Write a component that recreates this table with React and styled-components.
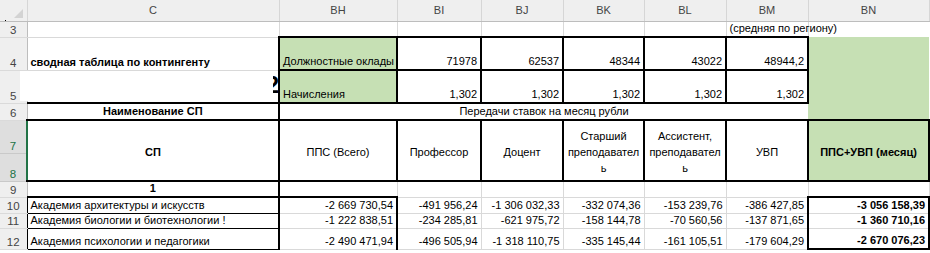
import React from 'react';
import styled, { createGlobalStyle } from 'styled-components';

const Global = createGlobalStyle`
  html, body { margin: 0; padding: 0; background: #fff; }
  body { font-family: "Liberation Sans", Arial, sans-serif; font-size: 11px; color: #000; }
`;

const GREEN = '#c6e0b4';
const GRID = '#d9d9d9';

const bd = (v) => {
  switch (v) {
    case 'K': return '2px solid #000';
    case 'k': return '1px solid #000';
    case 'n': return 'none';
    case 'h': return 'hidden';
    default: return `1px solid ${GRID}`;
  }
};

const Sheet = styled.div`
  position: relative;
  width: 930px;
  height: 253px;
  overflow: hidden;
  background: #fff;
`;

const Table = styled.table`
  border-collapse: collapse;
  table-layout: fixed;
  width: 929px;
`;

const Row = styled.tr`
  height: ${(p) => p.$h}px;
`;

const ColHead = styled.th`
  background: #efefef;
  color: #444;
  font-weight: 400;
  font-size: 11px;
  text-align: center;
  vertical-align: middle;
  padding: 0;
  border-right: 1px solid #d6d6d6;
  border-bottom: 1px solid #bdbdbd;
  border-top: none;
`;

const Corner = styled.th`
  background: #efefef;
  border-right: 1px solid #d6d6d6;
  border-bottom: 1px solid #bdbdbd;
  padding: 0;
  position: relative;
`;

const Tri = styled.span`
  position: absolute;
  right: 4px;
  bottom: 3px;
  width: 0;
  height: 0;
  border-left: 9px solid transparent;
  border-bottom: 9px solid #d3d3d3;
`;

const RowHead = styled.th`
  background: ${(p) => (p.$sel ? '#dedede' : '#efefef')};
  color: ${(p) => (p.$sel ? '#217346' : '#444')};
  font-weight: 400;
  font-size: 11.5px;
  text-align: center;
  vertical-align: bottom;
  padding: 0 0 1px;
  border-bottom: 1px solid ${(p) => (p.$sel ? '#c9c9c9' : '#dadada')};
  border-right: ${(p) => (p.$dark ? '1px solid #000' : p.$sel ? '2px solid #217346' : '1px solid #bdbdbd')};
`;

const Cell = styled.td`
  border-top: ${(p) => bd(p.$t)};
  border-right: ${(p) => bd(p.$r)};
  border-bottom: ${(p) => bd(p.$b)};
  border-left: ${(p) => bd(p.$l)};
  background: ${(p) => (p.$fill ? GREEN : '#fff')};
  text-align: ${(p) => p.$align || 'left'};
  vertical-align: ${(p) => p.$valign || 'bottom'};
  font-weight: ${(p) => (p.$bold ? 700 : 400)};
  padding: ${(p) => (p.$valign === 'middle' ? '3px 3px 0' : '0 3px 1px')};
  white-space: nowrap;
  line-height: ${(p) => p.$lh || 13}px;
  overflow: visible;
`;

const WhitePatch = styled.div`
  position: absolute;
  left: 20px;
  top: 71px;
  width: 256px;
  height: 30px;
  background: #fff;
`;

const Glyph = styled.div`
  position: absolute;
  left: 273px;
  top: 76px;
  width: 5px;
  height: 22px;
  overflow: hidden;
  span {
    position: absolute;
    right: -1px;
    top: -3px;
    font-size: 24px;
    font-weight: 700;
    line-height: 24px;
  }
`;

const Speck = styled.div`
  position: absolute;
  left: 5px;
  top: 20px;
  width: 1px;
  height: 1px;
  background: #000;
`;

const cols = [27, 252, 118, 84, 82, 81, 82, 82, 121];
const letters = ['C', 'BH', 'BI', 'BJ', 'BK', 'BL', 'BM', 'BN'];

const heads = [
  'ППС (Всего)',
  'Профессор',
  'Доцент',
  ['Старший', 'преподавател', 'ь'],
  ['Ассистент,', 'преподавател', 'ь'],
  'УВП',
];

const data = [
  ['Академия архитектуры и искусств', '-2 669 730,54', '-491 956,24', '-1 306 032,33', '-332 074,36', '-153 239,76', '-386 427,85', '-3 056 158,39'],
  ['Академия биологии и биотехнологии !', '-1 222 838,51', '-234 285,81', '-621 975,72', '-158 144,78', '-70 560,56', '-137 871,65', '-1 360 710,16'],
  ['Академия психологии и педагогики', '-2 490 471,94', '-496 505,94', '-1 318 110,75', '-335 145,44', '-161 105,51', '-179 604,29', '-2 670 076,23'],
];

const salaries = ['71978', '62537', '48344', '43022', '48944,2'];
const rowH = [16, 15, 21];

export default function App() {
  return (
    <Sheet>
      <Global />
      <Table>
        <colgroup>
          {cols.map((w, i) => (
            <col key={i} style={{ width: w }} />
          ))}
        </colgroup>
        <tbody>
          <Row $h={21}>
            <Corner>
              <Tri />
            </Corner>
            {letters.map((l) => (
              <ColHead key={l}>{l}</ColHead>
            ))}
          </Row>

          <Row $h={16}>
            <RowHead>3</RowHead>
            <Cell />
            <Cell />
            <Cell />
            <Cell />
            <Cell />
            <Cell />
            <Cell>(средняя по региону)</Cell>
            <Cell $r="n" $l="n" />
          </Row>

          <Row $h={33}>
            <RowHead>4</RowHead>
            <Cell $bold $r="K">сводная таблица по контингенту</Cell>
            <Cell $fill $t="K" $b="K" $l="K" $r="K">Должностные оклады</Cell>
            {salaries.map((v) => (
              <Cell key={v} $align="right" $t="K" $b="K" $l="K" $r="K">{v}</Cell>
            ))}
            <Cell $fill $t="h" $b="n" $l="K" $r="n" />
          </Row>

          <Row $h={33}>
            <RowHead>5</RowHead>
            <Cell $b="K" $r="K" />
            <Cell $fill $t="K" $b="K" $l="K" $r="K">Начисления</Cell>
            {salaries.map((v, i) => (
              <Cell key={i} $align="right" $t="K" $b="K" $l="K" $r="K">1,302</Cell>
            ))}
            <Cell $fill $t="n" $b="n" $l="K" $r="n" />
          </Row>

          <Row $h={17}>
            <RowHead>6</RowHead>
            <Cell $bold $align="center" $t="K" $b="K" $r="K">Наименование СП</Cell>
            <Cell colSpan={6} $align="center" $t="K" $b="K" $l="K" $r="h">
              Передачи ставок на месяц рубли
            </Cell>
            <Cell $fill $t="n" $b="K" $l="h" $r="n" />
          </Row>

          <Row $h={33}>
            <RowHead $sel>7</RowHead>
            <Cell rowSpan={2} $bold $align="center" $valign="middle" $t="K" $b="K" $r="K">СП</Cell>
            {heads.map((h, i) => (
              <Cell key={i} rowSpan={2} $align="center" $valign="middle" $lh={16} $t="K" $b="K" $l="K" $r="K">
                {Array.isArray(h)
                  ? h.map((line, j) => (
                      <React.Fragment key={j}>
                        {j > 0 && <br />}
                        {line}
                      </React.Fragment>
                    ))
                  : h}
              </Cell>
            ))}
            <Cell rowSpan={2} $fill $bold $align="center" $valign="middle" $t="K" $b="K" $l="K" $r="K">
              ППС+УВП (месяц)
            </Cell>
          </Row>
          <Row $h={28}>
            <RowHead $sel>8</RowHead>
          </Row>

          <Row $h={16}>
            <RowHead>9</RowHead>
            <Cell $bold $align="center" $t="K" $b="K" $r="K">1</Cell>
            <Cell $t="K" $b="K" $l="K" />
            <Cell $t="K" />
            <Cell $t="K" />
            <Cell $t="K" />
            <Cell $t="K" />
            <Cell $t="K" />
            <Cell $t="K" $b="K" />
          </Row>

          {data.map((r, i) => (
            <Row key={i} $h={rowH[i]}>
              <RowHead $dark>{10 + i}</RowHead>
              <Cell $t={i === 0 ? 'K' : 'k'} $b="k" $l="k" $r="K">{r[0]}</Cell>
              <Cell $align="right" $l="K" $r="K" $t={i === 0 ? 'K' : 'g'}>{r[1]}</Cell>
              <Cell $align="right">{r[2]}</Cell>
              <Cell $align="right">{r[3]}</Cell>
              <Cell $align="right">{r[4]}</Cell>
              <Cell $align="right">{r[5]}</Cell>
              <Cell $align="right" $r="K">{r[6]}</Cell>
              <Cell $bold $align="right" $l="K" $r="K" $t={i === 0 ? 'K' : 'g'} $b={i === 2 ? 'K' : 'g'}>{r[7]}</Cell>
            </Row>
          ))}
        </tbody>
      </Table>
      <WhitePatch />
      <Glyph>
        <span>2</span>
      </Glyph>
      <Speck />
    </Sheet>
  );
}
